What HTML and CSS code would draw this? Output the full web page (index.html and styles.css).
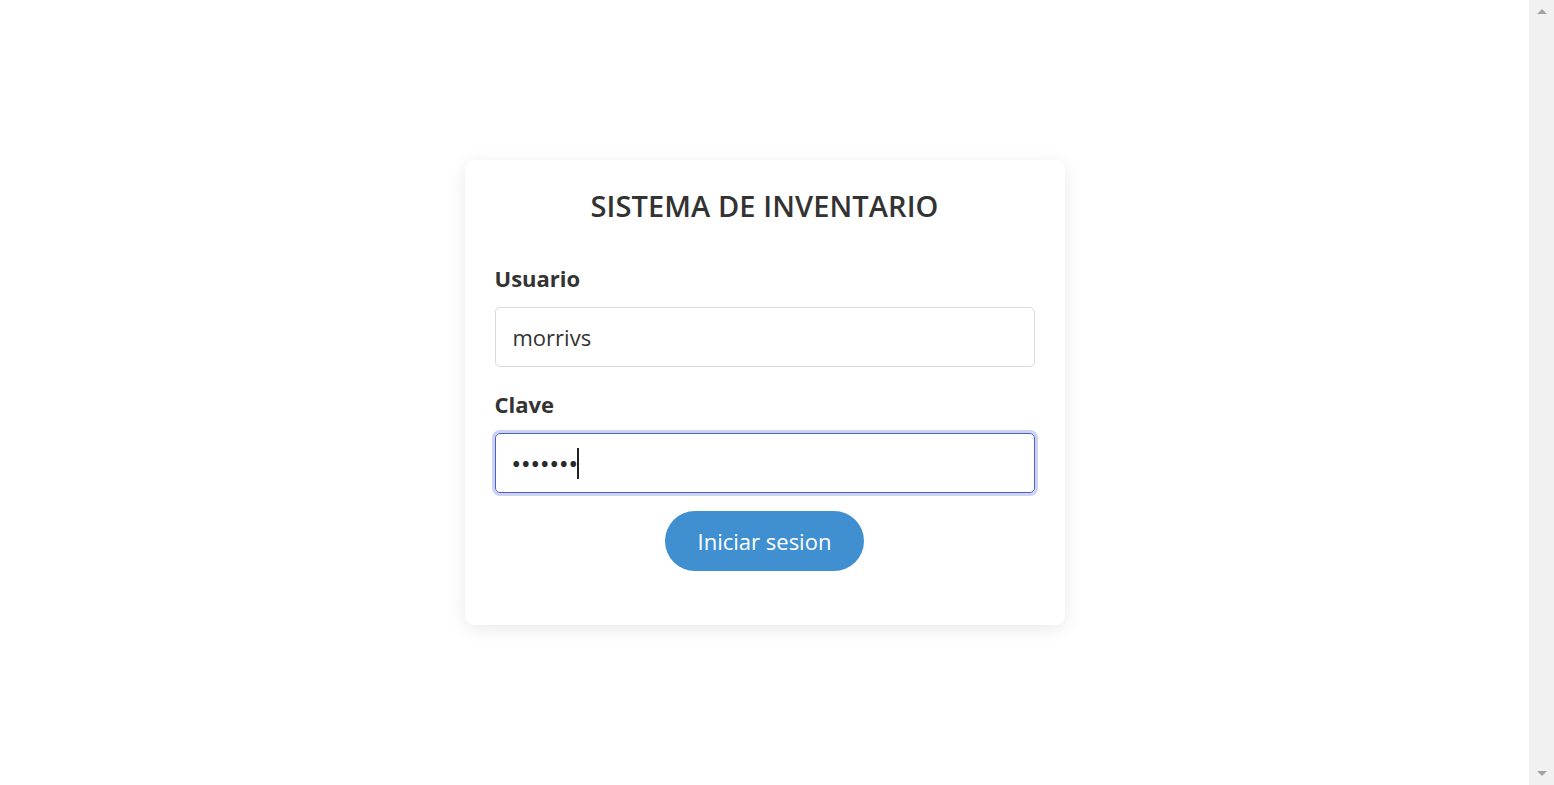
FILE: index.html
```html
<!DOCTYPE html>
<html lang="es">
<head>
<meta charset="utf-8">
<title>Sistema de Inventario</title>
<link rel="stylesheet" href="styles.css">
</head>
<body>
<div class="screen">
  <main class="page">
    <form class="card">
      <h1 class="title">SISTEMA DE INVENTARIO</h1>
      <label class="label" for="usuario">Usuario</label>
      <div class="input">morrivs</div>
      <label class="label" for="clave">Clave</label>
      <div class="input focused"><span class="dots">•••••••</span><span class="caret"></span></div>
      <div class="actions">
        <button class="btn" type="button">Iniciar sesion</button>
      </div>
    </form>
  </main>
  <aside class="scrollbar">
    <span class="arrow up"></span>
    <span class="arrow down"></span>
  </aside>
</div>
</body>
</html>
```
FILE: styles.css
```css
* { box-sizing: border-box; }
html, body { margin: 0; padding: 0; height: 100%; }
body {
  font-family: "Open Sans", "Noto Sans", "Liberation Sans", sans-serif;
  color: #333;
  background: #fff;
  overflow: hidden;
}
.screen {
  display: flex;
  height: 785px;
}
.page {
  flex: 1;
  display: flex;
  align-items: center;
  justify-content: center;
}
.card {
  width: 600px;
  height: 465px;
  padding: 30px 30px 0;
  background: #fff;
  border-radius: 9px;
  box-shadow: 0 4px 18px rgba(0, 0, 0, 0.09);
  display: flex;
  flex-direction: column;
}
.title {
  margin: 0;
  font-size: 29px;
  font-weight: 560;
  text-align: center;
  line-height: 32px;
  color: #333;
  letter-spacing: 0.1px;
}
.label {
  margin-top: 41px;
  font-size: 22px;
  font-weight: 700;
  line-height: 30px;
  color: #333;
}
.label + .input { margin-top: 14px; }
.input + .label { margin-top: 22px; }
.input {
  height: 60px;
  border: 1px solid #d9d9d9;
  border-radius: 5px;
  padding: 0 17px;
  font-size: 22px;
  display: flex;
  align-items: center;
  color: #333;
}
.input.focused {
  border-color: #4c5fcb;
  box-shadow: 0 0 0 3px #cdd2f2;
}
.dots {
  font-size: 20px;
  font-weight: 700;
  letter-spacing: 2px;
  color: #2a2a2a;
}
.caret {
  width: 1.5px;
  height: 31px;
  background: #222;
  margin-left: -2px;
}
.actions {
  display: flex;
  justify-content: center;
  margin-top: 18px;
}
.btn {
  width: 199px;
  height: 60px;
  border: none;
  border-radius: 30px;
  background: #3f8fd1;
  color: #fff;
  font-family: inherit;
  font-size: 22px;
  padding: 0;
  cursor: pointer;
}
.scrollbar {
  width: 25px;
  background: #f1f1f1;
  display: flex;
  flex-direction: column;
  justify-content: space-between;
  align-items: center;
  padding: 9px 0 9px 0;
}
.arrow {
  width: 0;
  height: 0;
  border-left: 5px solid transparent;
  border-right: 5px solid transparent;
}
.arrow.up { border-bottom: 5px solid #a3a3a3; }
.arrow.down { border-top: 5px solid #a3a3a3; }
```
